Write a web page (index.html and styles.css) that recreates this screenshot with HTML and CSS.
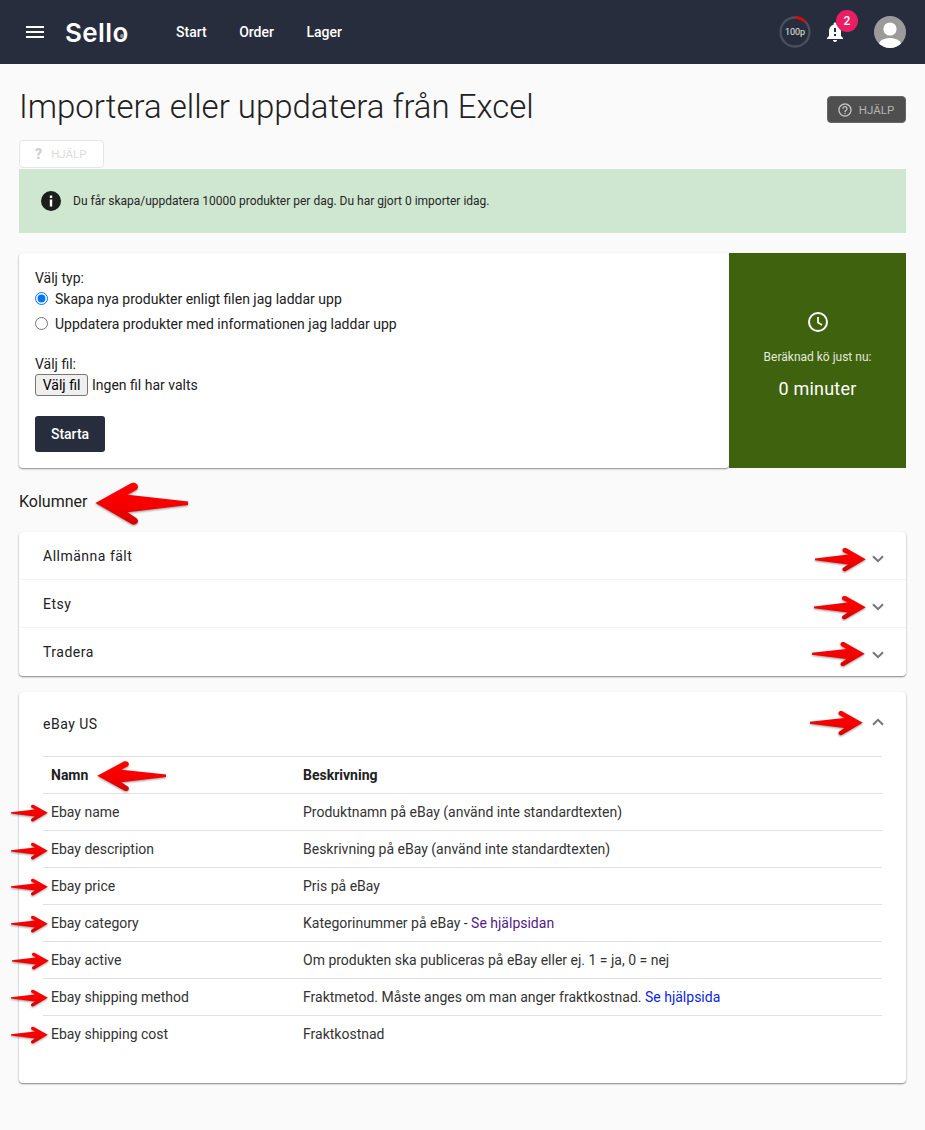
FILE: index.html
```html
<!DOCTYPE html>
<html lang="sv">
<head>
<meta charset="utf-8">
<title>Importera eller uppdatera från Excel</title>
<link rel="stylesheet" href="styles.css">
</head>
<body>
<svg class="defs" width="0" height="0" aria-hidden="true">
  <defs>
    <linearGradient id="redfill" x1="0" y1="0" x2="0" y2="1">
      <stop offset="0" stop-color="#ff0000"/>
      <stop offset="0.6" stop-color="#f40000"/>
      <stop offset="1" stop-color="#d40000"/>
    </linearGradient>
    <symbol id="arrow" viewBox="0 0 94 46" preserveAspectRatio="none">
      <path d="M0.500 22.500 36 2.500C41 0 46 5 42 9L33 14 94 21 94 24.500 33 32 42 38C46 42 41 46 37 44Z" fill="url(#redfill)"/>
    </symbol>
  </defs>
</svg>

<header class="topbar">
  <svg class="menu-icon" viewBox="0 0 18 12"><path d="M0 0h18v2H0zM0 5h18v2H0zM0 10h18v2H0z" fill="#fff"/></svg>
  <div class="logo">Sello<span class="logo-mark"></span></div>
  <nav class="nav">
    <a class="nav-link">Start</a>
    <a class="nav-link">Order</a>
    <a class="nav-link">Lager</a>
  </nav>
  <div class="top-right">
    <div class="gauge">
      <svg viewBox="0 0 32 32" class="gauge-ring">
        <circle cx="16" cy="16" r="14.500" fill="none" stroke="#4a5060" stroke-width="2.400"/>
        <path d="M16 1.500A14.500 14.500 0 0 1 26 5.500" fill="none" stroke="#f00000" stroke-width="2.400"/>
      </svg>
      <span class="gauge-text">100p</span>
    </div>
    <div class="bell">
      <svg viewBox="0 0 24 24" class="bell-icon"><path fill="#fff" d="M12 22c1.100 0 2-.9 2-2h-4c0 1.100.9 2 2 2zm6-6v-5c0-3.070-1.630-5.640-4.500-6.320V4c0-.83-.67-1.500-1.500-1.500s-1.500.67-1.500 1.500v.68C7.640 5.360 6 7.920 6 11v5l-2 2v1h16v-1l-2-2zm-5 0h-2v-2h2v2zm0-4h-2V8h2v4z"/></svg>
      <span class="badge">2</span>
    </div>
    <svg class="avatar" viewBox="0 0 32 32">
      <defs><clipPath id="avclip"><circle cx="16" cy="16" r="16"/></clipPath></defs>
      <circle cx="16" cy="16" r="16" fill="#9b9b9b"/>
      <g clip-path="url(#avclip)" fill="#fff">
        <circle cx="16" cy="13" r="6.600"/>
        <path d="M5 32v-4c0-3.800 6.400-6 11-6s11 2.200 11 6v4z"/>
      </g>
    </svg>
  </div>
</header>

<main class="page">
  <div class="title-row">
    <h1 class="title">Importera eller uppdatera från Excel</h1>
    <button class="help-dark" type="button">
      <svg viewBox="0 0 24 24" class="help-icon"><path fill="#c4c4c4" d="M11 18h2v-2h-2v2zm1-16C6.480 2 2 6.480 2 12s4.480 10 10 10 10-4.480 10-10S17.520 2 12 2zm0 18c-4.410 0-8-3.590-8-8s3.590-8 8-8 8 3.590 8 8-3.590 8-8 8zm0-14c-2.210 0-4 1.790-4 4h2c0-1.100.9-2 2-2s2 .9 2 2c0 2-3 1.750-3 5h2c0-2.250 3-2.500 3-5 0-2.210-1.790-4-4-4z"/></svg>
      HJÄLP
    </button>
  </div>

  <button class="help-light" type="button"><span class="q">?</span>HJÄLP</button>

  <div class="alert">
    <svg viewBox="0 0 24 24" class="alert-icon"><circle cx="12" cy="12" r="10" fill="#1b1f1b"/><path fill="#fff" d="M10.800 10.500h2.400v7h-2.400zM10.800 6.500h2.400V9h-2.400z"/></svg>
    <span>Du får skapa/uppdatera 10000 produkter per dag. Du har gjort 0 importer idag.</span>
  </div>

  <section class="import-card">
    <form class="import-form">
      <div class="field-label">Välj typ:</div>
      <label class="radio-row"><input type="radio" name="typ" checked>Skapa nya produkter enligt filen jag laddar upp</label>
      <label class="radio-row"><input type="radio" name="typ">Uppdatera produkter med informationen jag laddar upp</label>
      <div class="field-label file-label">Välj fil:</div>
      <div class="file-row"><button class="file-btn" type="button">Välj fil</button><span>Ingen fil har valts</span></div>
      <button class="start-btn" type="button">Starta</button>
    </form>
    <aside class="queue">
      <svg viewBox="0 0 24 24" class="clock"><circle cx="12" cy="12" r="9" fill="none" stroke="#fff" stroke-width="2"/><path d="M12 7v5.500l4 2.400" fill="none" stroke="#fff" stroke-width="1.700"/></svg>
      <div class="queue-label">Beräknad kö just nu:</div>
      <div class="queue-value">0 minuter</div>
    </aside>
  </section>

  <h2 class="section-title">Kolumner</h2>

  <section class="accordion">
    <div class="acc-row"><span>Allmänna fält</span><svg class="chev chev-down" viewBox="0 0 12 8"><path d="M1 1.200 6 6.200l5-5" fill="none" stroke="#757575" stroke-width="2"/></svg></div>
    <div class="acc-row"><span>Etsy</span><svg class="chev chev-down" viewBox="0 0 12 8"><path d="M1 1.200 6 6.200l5-5" fill="none" stroke="#757575" stroke-width="2"/></svg></div>
    <div class="acc-row"><span>Tradera</span><svg class="chev chev-down" viewBox="0 0 12 8"><path d="M1 1.200 6 6.200l5-5" fill="none" stroke="#757575" stroke-width="2"/></svg></div>
  </section>

  <section class="panel">
    <div class="acc-row panel-head"><span>eBay US</span><svg class="chev chev-up" viewBox="0 0 12 8"><path d="M1 6.800 6 1.800l5 5" fill="none" stroke="#757575" stroke-width="2"/></svg></div>
    <table class="fields">
      <thead><tr><th>Namn</th><th>Beskrivning</th></tr></thead>
      <tbody>
        <tr><td>Ebay name</td><td>Produktnamn på eBay (använd inte standardtexten)</td></tr>
        <tr><td>Ebay description</td><td>Beskrivning på eBay (använd inte standardtexten)</td></tr>
        <tr><td>Ebay price</td><td>Pris på eBay</td></tr>
        <tr><td>Ebay category</td><td>Kategorinummer på eBay - <a class="visited">Se hjälpsidan</a></td></tr>
        <tr><td>Ebay active</td><td>Om produkten ska publiceras på eBay eller ej. 1 = ja, 0 = nej</td></tr>
        <tr><td>Ebay shipping method</td><td>Fraktmetod. Måste anges om man anger fraktkostnad. <a class="link">Se hjälpsida</a></td></tr>
        <tr><td>Ebay shipping cost</td><td>Fraktkostnad</td></tr>
      </tbody>
    </table>
  </section>
</main>

<svg class="arw a-kol"><use href="#arrow"/></svg>
<svg class="arw flip a-acc1"><use href="#arrow"/></svg>
<svg class="arw flip a-acc2"><use href="#arrow"/></svg>
<svg class="arw flip a-acc3"><use href="#arrow"/></svg>
<svg class="arw flip a-acc4"><use href="#arrow"/></svg>
<svg class="arw a-namn"><use href="#arrow"/></svg>
<svg class="arw flip a-r a-r1"><use href="#arrow"/></svg>
<svg class="arw flip a-r a-r2"><use href="#arrow"/></svg>
<svg class="arw flip a-r a-r3"><use href="#arrow"/></svg>
<svg class="arw flip a-r a-r4"><use href="#arrow"/></svg>
<svg class="arw flip a-r a-r5"><use href="#arrow"/></svg>
<svg class="arw flip a-r a-r6"><use href="#arrow"/></svg>
<svg class="arw flip a-r a-r7"><use href="#arrow"/></svg>
</body>
</html>
```
FILE: styles.css
```css
* { box-sizing: border-box; }
html, body { margin: 0; padding: 0; }
body {
  position: relative;
  min-height: 1130px;
  background: #fafafa;
  color: #212121;
  font-family: Roboto, "Liberation Sans", sans-serif;
  font-size: 14px;
  overflow: hidden;
}
.defs { position: absolute; }

/* top bar */
.topbar {
  height: 64px;
  background: #272d3c;
  display: flex;
  align-items: center;
  padding: 0 19px 0 26px;
  color: #fff;
}
.menu-icon { width: 18px; height: 12px; flex: none; }
.logo {
  position: relative;
  margin-left: 21px;
  font-family: Inter, Roboto, sans-serif;
  font-size: 26px;
  font-weight: 600;
  letter-spacing: 0.4px;
  width: 111px;
}
.logo-mark {
  position: absolute;
  left: 55px;
  top: 17px;
  width: 4px;
  height: 4px;
  border-radius: 50%;
  background: #8d919b;
}
.nav { display: flex; gap: 32.500px; margin-top: -1px; }
.nav-link { font-size: 14px; font-weight: 500; color: #fff; }
.top-right { margin-left: auto; display: flex; align-items: center; }
.gauge { position: relative; width: 32px; height: 32px; }
.gauge-ring { width: 32px; height: 32px; display: block; }
.gauge-text {
  position: absolute;
  inset: 0;
  display: flex;
  align-items: center;
  justify-content: center;
  font-size: 9px;
  color: #e6e6e6;
}
.bell { position: relative; width: 24px; height: 24px; margin-left: 12px; }
.bell-icon { width: 24px; height: 24px; display: block; }
.badge {
  position: absolute;
  top: -10px;
  left: 13px;
  width: 22px;
  height: 22px;
  border-radius: 50%;
  background: #e91e63;
  color: #fff;
  font-size: 12px;
  font-weight: 500;
  display: flex;
  align-items: center;
  justify-content: center;
}
.avatar { width: 32px; height: 32px; margin-left: 27px; }

/* page */
.page { padding: 0 19px; }
.title-row {
  display: flex;
  justify-content: space-between;
  align-items: flex-start;
  padding-top: 23px;
  height: 76px;
}
.title {
  margin: 0;
  font-size: 33px;
  line-height: 40px;
  font-weight: 300;
  color: #212121;
}
.help-dark {
  margin-top: 9px;
  height: 27px;
  width: 79px;
  display: flex;
  align-items: center;
  justify-content: center;
  gap: 6px;
  background: #4f4f4f;
  border: 1px solid #666;
  border-radius: 4px;
  color: #b5b5b5;
  font: 400 11.500px Roboto, sans-serif;
  padding: 0 2px 0 0;
}
.help-icon { width: 16px; height: 16px; }
.help-light {
  display: flex;
  align-items: center;
  width: 85px;
  height: 28px;
  margin-bottom: 1px;
  background: #fff;
  border: 1px solid #e6e6e6;
  border-radius: 4px;
  color: #dcdcdc;
  font: 400 11.500px Roboto, sans-serif;
  padding: 0 0 0 15px;
}
.q { font-weight: 900; font-size: 14px; margin-right: 9px; color: #cfcfcf; }
.alert {
  height: 64px;
  background: #cfe6d0;
  display: flex;
  align-items: center;
  gap: 10px;
  padding-left: 20px;
  font-size: 12px;
  color: #262626;
}
.alert-icon { width: 24px; height: 24px; flex: none; }

/* import card */
.import-card {
  margin-top: 20px;
  height: 215px;
  display: flex;
  background: #fff;
  border-radius: 4px 0 0 4px;
}
.import-form {
  flex: 1;
  padding: 18px 16px;
  border-radius: 4px;
  box-shadow: 0 1px 2px rgba(0,0,0,.45);
  clip-path: inset(-4px 0 -4px -4px);
}
.field-label { line-height: 15px; }
.radio-row {
  display: flex;
  align-items: center;
  height: 25px;
  gap: 7px;
}
.radio-row input { margin: 0; width: 13px; height: 13px; accent-color: #0075ff; }
.file-label { margin-top: 20px; height: 18px; line-height: 16px; }
.file-row { display: flex; align-items: center; gap: 4px; height: 22px; }
.file-btn {
  height: 22px;
  width: 53px;
  padding: 0;
  font: 400 14px Roboto, sans-serif;
  background: #efefef;
  border: 1px solid #767676;
  border-radius: 3px;
  color: #000;
}
.start-btn {
  display: block;
  margin-top: 20px;
  width: 70px;
  height: 36px;
  background: #272d3c;
  color: #fff;
  border: 0;
  border-radius: 3px;
  font: 500 14px Roboto, sans-serif;
}
.queue {
  width: 177px;
  background: #3f620e;
  color: #fff;
  display: flex;
  flex-direction: column;
  align-items: center;
  padding-top: 57px;
}
.clock { width: 24px; height: 24px; }
.queue-label { margin-top: 16px; font-size: 12px; color: #e3e9db; }
.queue-value { margin-top: 14px; font-size: 18px; letter-spacing: 0.2px; }

/* sections */
.section-title {
  margin: 0;
  height: 64px;
  display: flex;
  align-items: center;
  font-size: 16px;
  font-weight: 400;
  padding-top: 2px;
}
.accordion, .panel {
  background: #fff;
  border-radius: 4px;
  box-shadow: 0 1px 2px rgba(0,0,0,.4), 0 1px 1px rgba(0,0,0,.1);
}
.acc-row {
  height: 48px;
  display: flex;
  align-items: center;
  justify-content: space-between;
  padding: 0 22px 0 24px;
  font-size: 14px;
  letter-spacing: 0.5px;
  border-bottom: 1px solid #f3f3f3;
}
.acc-row:last-child { border-bottom: 0; }
.chev { width: 12px; height: 8px; }
.chev-down { margin-top: 6px; }
.chev-up { margin-top: -4px; }
.panel { margin-top: 16px; height: 391px; }
.panel-head { height: 64px; border-bottom: 0; }
.fields {
  width: 839px;
  margin-left: 24px;
  border-collapse: collapse;
  table-layout: fixed;
  font-size: 14px;
}
.fields th, .fields td {
  height: 37px;
  padding: 0 8px;
  text-align: left;
  border-top: 1px solid #e0e0e0;
  color: #333;
}
.fields th { font-weight: 700; color: #212121; }
.fields th:first-child, .fields td:first-child { width: 252px; }
.visited { color: #551a8b; }
.link { color: #0b24e6; }

/* red annotation arrows */
.arw { position: absolute; filter: drop-shadow(0 1px 1px rgba(60,60,60,.55)); overflow: visible; }
.flip { transform: scaleX(-1); }
.a-kol { left: 95px; top: 481px; width: 93px; height: 45px; }
.a-acc1 { left: 815px; top: 547px; width: 51px; height: 25px; }
.a-acc2 { left: 814px; top: 595px; width: 52px; height: 25px; }
.a-acc3 { left: 812px; top: 641px; width: 53px; height: 26px; }
.a-acc4 { left: 810px; top: 710px; width: 53px; height: 26px; }
.a-namn { left: 97px; top: 760px; width: 69px; height: 32px; }
.a-r { left: 11px; width: 37px; height: 18px; }
.a-r1 { top: 804px; }
.a-r2 { top: 842px; }
.a-r3 { top: 878px; }
.a-r4 { top: 915px; }
.a-r5 { top: 952px; left: 12px; }
.a-r6 { top: 989px; }
.a-r7 { top: 1026px; }
```
